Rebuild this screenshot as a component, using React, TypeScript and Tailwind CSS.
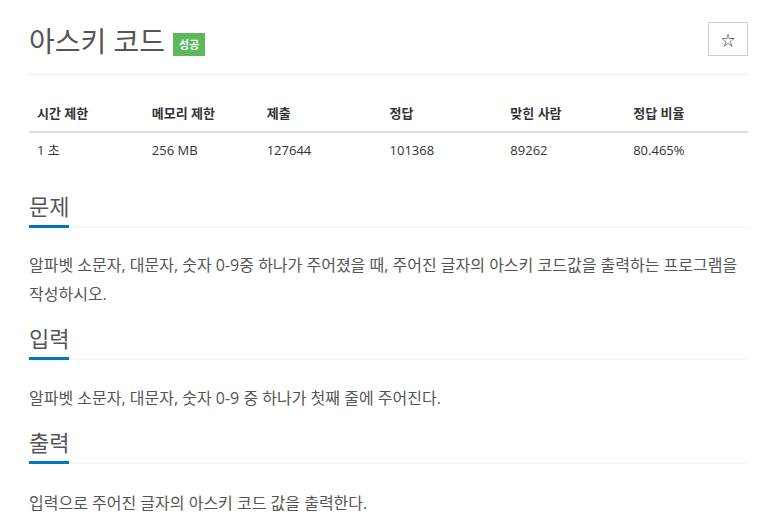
const font = { fontFamily: '"Open Sans", "Noto Sans CJK KR", sans-serif' }

const stats = [
  { label: '시간 제한', value: '1 초', w: 'w-[115px]' },
  { label: '메모리 제한', value: '256 MB', w: 'w-[115px]' },
  { label: '제출', value: '127644', w: 'w-[123px]' },
  { label: '정답', value: '101368', w: 'w-[121px]' },
  { label: '맞힌 사람', value: '89262', w: 'w-[123px]' },
  { label: '정답 비율', value: '80.465%', w: 'w-[123px]' },
]

const SectionTitle = ({ title, top }: { title: string, top: string }) => {
  return (
    <div className={top}>
      <h2 className="text-[22px] leading-[32px] text-[#555]">{title}</h2>
      <div className="flex items-end mt-[3px]">
        <div className="w-[40px] h-[3px] bg-[#0076c0]" />
        <div className="flex-1 border-b border-dotted border-[#d9e4ee]" />
      </div>
    </div>
  )
}

export default function App() {
  return (
    <div className="bg-white min-h-[526px] pt-[20px] pl-[29px]" style={font}>
      <div className="w-[719px]">
        <div className="flex items-start justify-between pb-[14px] border-b border-[#eee]">
          <div className="flex items-end mt-[2px]">
            <h1 className="text-[28px] leading-[38px] text-[#555]">아스키 코드</h1>
            <span className="ml-[8px] mb-[4px] bg-[#5cb85c] text-white text-[11px] font-bold px-[6px] h-[23px] leading-[23px]">성공</span>
          </div>
          <button className="mt-[2px] w-[40px] h-[34px] border border-[#ccc] bg-white flex items-center justify-center text-[14px] text-[#333]">
            ☆
          </button>
        </div>

        <div className="mt-[29px] text-[13px] text-[#333]">
          <div className="flex border-b-2 border-[#ddd] pb-[7px]">
            {stats.map((s, i) => (
              <div key={i} className={`${s.w} px-[8px] font-bold`}>{s.label}</div>
            ))}
          </div>
          <div className="flex pt-[8px]">
            {stats.map((s, i) => (
              <div key={i} className={`${s.w} px-[8px]`}>{s.value}</div>
            ))}
          </div>
        </div>

        <SectionTitle title="문제" top="mt-[30px]" />
        <p className="mt-[23px] text-[16px] leading-[29px] text-[#555] break-keep">
          알파벳 소문자, 대문자, 숫자 0-9중 하나가 주어졌을 때, 주어진 글자의 아스키 코드값을 출력하는 프로그램을 작성하시오.
        </p>
        <SectionTitle title="입력" top="mt-[13px]" />
        <p className="mt-[24px] text-[16px] leading-[29px] text-[#555] break-keep">
          알파벳 소문자, 대문자, 숫자 0-9 중 하나가 첫째 줄에 주어진다.
        </p>
        <SectionTitle title="출력" top="mt-[13px]" />
        <p className="mt-[25px] text-[16px] leading-[29px] text-[#555] break-keep">
          입력으로 주어진 글자의 아스키 코드 값을 출력한다.
        </p>
      </div>
    </div>
  )
}
